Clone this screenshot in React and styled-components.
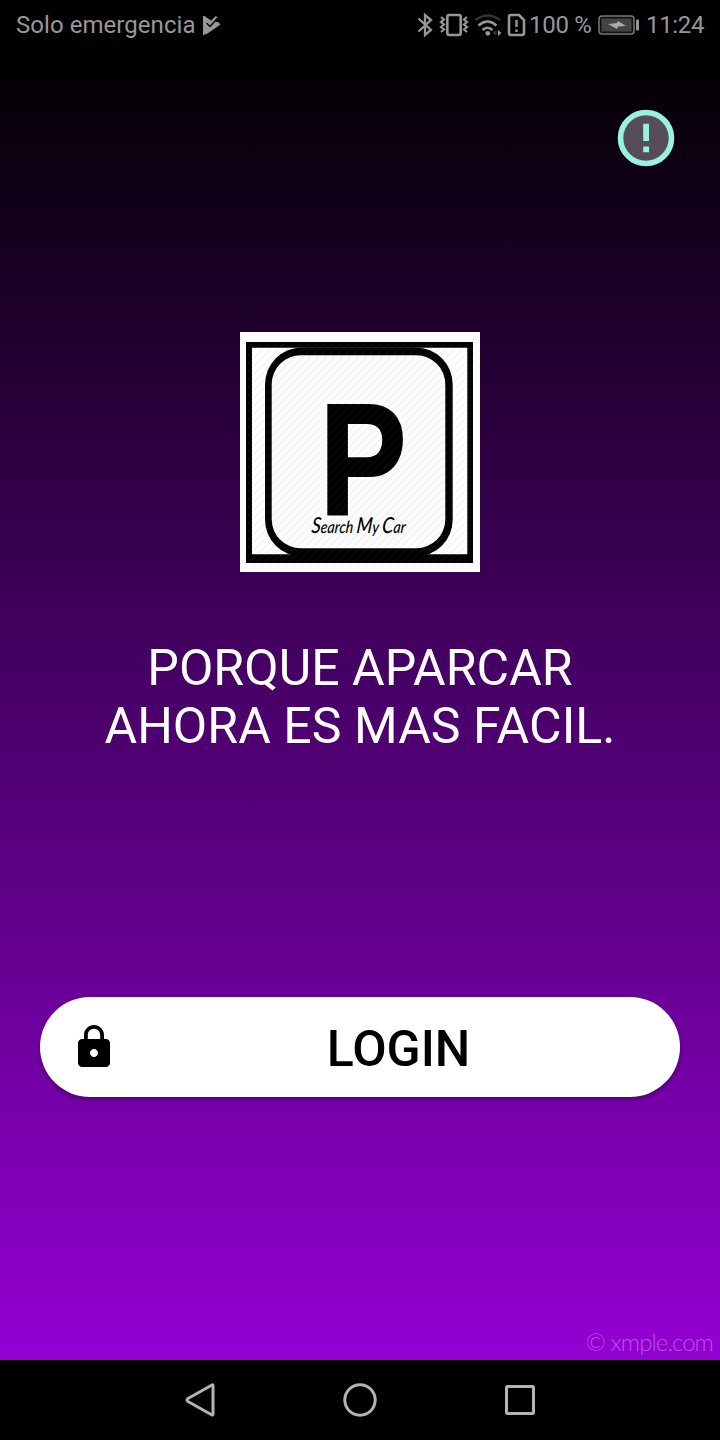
import React from 'react';
import styled, { createGlobalStyle } from 'styled-components';

const GlobalStyle = createGlobalStyle`
  *, *::before, *::after { box-sizing: border-box; }
  body { margin: 0; background: #000; font-family: Roboto, sans-serif; }
`;

const Screen = styled.div`
  width: 720px;
  height: 1440px;
  display: flex;
  flex-direction: column;
  overflow: hidden;
`;

const StatusBar = styled.header`
  height: 48px;
  flex: none;
  display: flex;
  align-items: center;
  justify-content: space-between;
  padding: 1px 15px 0 16px;
  background: #000;
  color: #979797;
  font-size: 24px;
  line-height: 48px;
  white-space: nowrap;
`;

const StatusGroup = styled.div`
  display: flex;
  align-items: center;
`;

const StatusText = styled.span`
  width: ${(p) => p.$width}px;
  margin-left: ${(p) => p.$gap || 0}px;
  letter-spacing: ${(p) => p.$spacing || 0}px;
`;

const StatusIcon = styled.svg`
  display: block;
  flex: none;
  margin-left: ${(p) => p.$gap || 0}px;
`;

const Main = styled.main`
  flex: 1;
  display: flex;
  flex-direction: column;
  align-items: center;
  padding: 60px 40px 0;
  background: linear-gradient(#000, #9400d3);
`;

const InfoButton = styled.button`
  align-self: flex-end;
  width: 60px;
  height: 60px;
  margin-right: 4px;
  padding: 0;
  border: 0;
  background: none;
`;

const Logo = styled.svg`
  display: block;
  width: 240px;
  height: 240px;
  margin-top: 164px;
`;

const Headline = styled.h1`
  margin: 67px 0 0;
  color: #fff;
  font-size: 50px;
  font-weight: 400;
  line-height: 58px;
  letter-spacing: 0.06px;
  text-align: center;
`;

const LoginButton = styled.button`
  display: flex;
  align-items: center;
  width: 640px;
  height: 100px;
  margin-top: 242px;
  padding: 0 30px;
  border: 0;
  border-radius: 50px;
  background: #fff;
  color: #000;
  font: 500 50px/58px Roboto, sans-serif;
  box-shadow: 0 3px 5px rgba(0, 0, 0, 0.32);
`;

const LoginLabel = styled.span`
  flex: 1;
  padding: 4px 0 0 29px;
  text-align: center;
`;

const Watermark = styled.small`
  align-self: flex-end;
  margin: auto -33px 2px 0;
  color: rgba(255, 255, 255, 0.34);
  font: 300 24px/32px Lato, sans-serif;
  letter-spacing: -0.95px;
`;

const NavBar = styled.nav`
  height: 80px;
  flex: none;
  display: flex;
  align-items: center;
  justify-content: center;
  gap: 120px;
  background: #000;
`;

const NavIcon = styled.svg`
  display: block;
  width: 40px;
  height: 40px;
  fill: none;
  stroke: #b3b3b3;
  stroke-width: 3;
  stroke-linejoin: round;
`;

function SignalIcons() {
  return (
    <StatusIcon width="110" height="32" viewBox="416 8 110 32" fill="none" stroke="#979797" strokeWidth="2">
      <path d="M418.500 17.500l12.500 11.500-6 5V14l6 5-12.500 11.500" strokeWidth="2.300" />
      <rect x="447.300" y="14" width="13.400" height="20" rx="2" strokeWidth="2.600" />
      <path d="M441 16l3 2.500-3 2.500 3 2.500-3 2.500 3 2.500-3 2.500M467 16l-3 2.500 3 2.500-3 2.500 3 2.500-3 2.500 3 2.500" strokeWidth="2.200" />
      <path d="M475.500 19q12.300-9 24.500 0" stroke="#333" strokeWidth="2.400" />
      <path d="M478.500 24.500q9-8 18 0M482.500 29q5-4.500 10 0" strokeWidth="2.600" />
      <circle cx="487.800" cy="32.300" r="2.400" fill="#979797" stroke="none" />
      <path d="M496.500 29v6l-4-3z" fill="#333" stroke="none" />
      <path d="M498 29v6l3.500-3z" fill="#979797" stroke="none" />
      <path d="M511 14h8l5 5v13q0 2-2 2h-11q-2 0-2-2V16q0-2 2-2z" strokeWidth="2.600" />
      <path d="M516.500 19v7M516.500 28.500v2.500" strokeWidth="2.400" />
    </StatusIcon>
  );
}

export default function App() {
  return (
    <>
      <GlobalStyle />
      <Screen>
        <StatusBar>
          <StatusGroup>
            <StatusText $width={181} $spacing={0.05}>Solo emergencia</StatusText>
            <StatusIcon $gap={5} width="20" height="22" viewBox="202 14 20 22">
              <path d="M203 16h1.500l6.500 4.500 5-4.500 2 2-3 4h3l2.500 2.500-13 9-4 1.500h-.5z" fill="#979797" />
              <path d="M206.500 23l3.500 3.500 7.500-8.500" fill="none" stroke="#000" strokeWidth="1.300" />
            </StatusIcon>
          </StatusGroup>
          <StatusGroup>
            <SignalIcons />
            <StatusText $width={63} $gap={3} $spacing={-0.3}>100 %</StatusText>
            <StatusIcon $gap={5} width="42" height="22" viewBox="597 13 42 22">
              <rect x="599" y="15" width="35" height="18" rx="3" fill="#111" stroke="#777" strokeWidth="1.500" />
              <rect x="601.500" y="17.500" width="30" height="13" fill="#444" />
              <path d="M608 23l9-1 1-2 8 5-8 .5-1 2.500z" fill="#aaa" />
              <rect x="636" y="18.500" width="3" height="11" rx="1" fill="#979797" />
            </StatusIcon>
            <StatusText $width={59} $gap={7} $spacing={-0.35}>11:24</StatusText>
          </StatusGroup>
        </StatusBar>
        <Main>
          <InfoButton aria-label="Info">
            <svg width="60" height="60" viewBox="0 0 60 60">
              <circle cx="30" cy="30" r="25.500" fill="#574d58" stroke="#95f3e0" strokeWidth="5.600" />
              <path d="M27.200 15.800h5.800v17.200h-5.800zM27.200 38.500h5.800v5.800h-5.800z" fill="#95f3e0" />
            </svg>
          </InfoButton>
          <Logo viewBox="0 0 240 240">
            <defs>
              <pattern id="hatch" width="8" height="8" patternUnits="userSpaceOnUse">
                <path d="M-1 1l2-2M0 8L8 0M7 9l2-2" stroke="#808080" strokeOpacity=".12" strokeWidth="1" />
              </pattern>
            </defs>
            <path d="M0 0h240v240H0z" fill="#fff" />
            <path d="M6 10h227v221H6zM12 15.700v206.600h215.300V15.700z" fillRule="evenodd" />
            <rect x="25" y="15.500" width="187.700" height="209" rx="37" />
            <rect x="31.700" y="23.300" width="173.600" height="193" rx="29" fill="#fdfdfd" />
            <text transform="translate(79.500 183) scale(.815 1)" fontFamily="Liberation Sans" fontWeight="700" fontSize="160" stroke="#000" strokeWidth="2.200">P</text>
            <text transform="translate(71 201) skewX(-6)" fontFamily="Lato" fontStyle="italic" fontWeight="500" fontSize="17" textLength="94" lengthAdjust="spacingAndGlyphs">
              <tspan fontSize="22">S</tspan>earch <tspan fontSize="22">M</tspan>y <tspan fontSize="22">C</tspan>ar
            </text>
            <path d="M0 0h240v240H0z" fill="url(#hatch)" />
          </Logo>
          <Headline>PORQUE APARCAR<br />AHORA ES MAS FACIL.</Headline>
          <LoginButton>
            <svg width="48" height="48" viewBox="0 0 24 24">
              <path d="M18 8h-1V6c0-2.760-2.240-5-5-5S7 3.240 7 6v2H6c-1.100 0-2 .9-2 2v10c0 1.100.9 2 2 2h12c1.100 0 2-.9 2-2V10c0-1.100-.9-2-2-2zm-6 9c-1.100 0-2-.9-2-2s.9-2 2-2 2 .9 2 2-.9 2-2 2zm3.100-9H8.900V6c0-1.710 1.390-3.100 3.100-3.100 1.710 0 3.100 1.390 3.100 3.100v2z" />
            </svg>
            <LoginLabel>LOGIN</LoginLabel>
          </LoginButton>
          <Watermark>© xmple.com</Watermark>
        </Main>
        <NavBar>
          <NavIcon viewBox="0 0 40 40"><path d="M33 5.500v29a.8.8 0 0 1-1 .5L8 21.500q-2-1.500 0-3L32 5q.8-.4 1 .5z" /></NavIcon>
          <NavIcon viewBox="0 0 40 40"><circle cx="20" cy="20" r="15.200" /></NavIcon>
          <NavIcon viewBox="0 0 40 40"><rect x="6.500" y="6.500" width="27" height="27" rx="1" /></NavIcon>
        </NavBar>
      </Screen>
    </>
  );
}
